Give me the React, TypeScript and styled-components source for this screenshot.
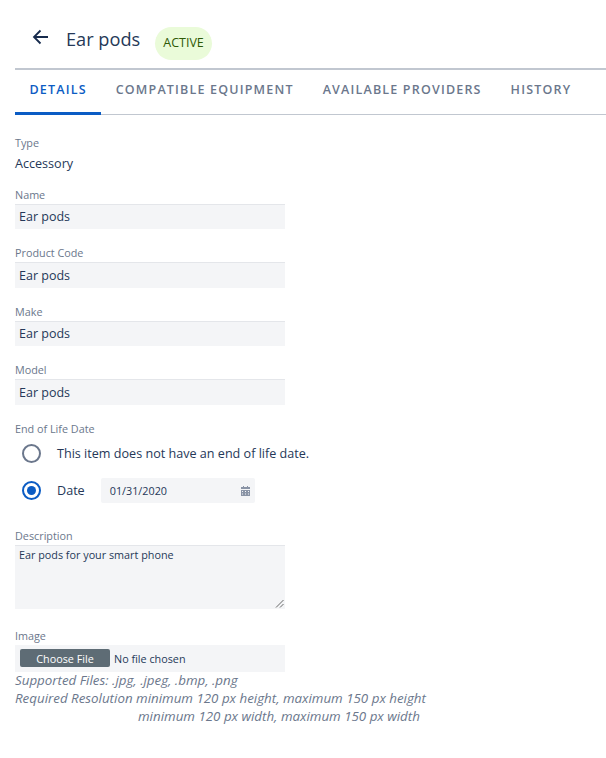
import React from 'react';
import styled, { createGlobalStyle } from 'styled-components';

const GlobalStyle = createGlobalStyle`
  html, body {
    margin: 0;
    padding: 0;
    background: #fff;
    font-family: "Open Sans", "Liberation Sans", sans-serif;
    color: #253858;
  }
`;

const Page = styled('div')`
  width: 606px;
  height: 758px;
  box-sizing: border-box;
  padding-left: 15px;
  overflow: hidden;
`;
const Header = styled('header')`
  height: 68px;
  box-sizing: border-box;
  padding: 27px 0 0 16px;
  display: flex;
  align-items: flex-start;
`;
const BackButton = styled('div')`
  width: 20px;
  height: 20px;
  margin-right: 15px;
  color: #172b4d;
`;
const Title = styled('h1')`
  margin: 0 15px 0 0;
  font-size: 18.2px;
  line-height: 24px;
  font-weight: 500;
  color: #253858;
`;
const Badge = styled('span')`
  height: 33px;
  box-sizing: border-box;
  padding: 0 8px 2px;
  display: flex;
  align-items: center;
  border-radius: 17px;
  background: #eafbd9;
  color: #2f5a06;
  font-size: 12.5px;
  font-weight: 500;
`;
const Tabs = styled('nav')`
  display: flex;
  height: 44px;
  border-top: 2px solid #c1c7d0;
  border-bottom: 1px solid #c1c7d0;
`;
const Tab = styled('div')<{ $active?: boolean }>`
  height: 45px;
  box-sizing: border-box;
  padding: 0 14.5px 3px;
  display: flex;
  align-items: center;
  font-size: 12.5px;
  font-weight: 600;
  letter-spacing: 1.18px;
  color: ${props => (props.$active ? '#0b5cc4' : '#6b778c')};
  border-bottom: 3px solid ${props => (props.$active ? '#0b5cc4' : 'transparent')};
`;
const Form = styled('div')`
  padding-top: 21px;
`;
const Label = styled('div')`
  font-size: 10.8px;
  line-height: 14px;
  margin-bottom: 2px;
  color: #6b778c;
`;
const TypeValue = styled('div')`
  font-size: 12.6px;
  line-height: 16px;
  margin-top: 6px;
  color: #253858;
`;
const Field = styled('div')<{ $gap?: number }>`
  margin-top: ${props => props.$gap ?? 17}px;
`;
const TextBox = styled('div')`
  width: 270px;
  height: 25.5px;
  box-sizing: border-box;
  padding: 0 4px;
  display: flex;
  align-items: center;
  background: #f4f5f7;
  border-top: 1px solid #e4e6ea;
  font-size: 12.5px;
  color: #253858;
`;
const RadioGroup = styled('div')`
  display: flex;
  flex-direction: column;
  gap: 7px;
  padding-top: 1px;
`;
const RadioRow = styled('div')`
  height: 30px;
  display: flex;
  align-items: center;
  padding-left: 7px;
`;
const RadioCircle = styled('span')<{ $checked?: boolean }>`
  width: 19px;
  height: 19px;
  box-sizing: border-box;
  border-radius: 50%;
  border: 2px solid ${props => (props.$checked ? '#0b5cc4' : '#6b778c')};
  display: flex;
  align-items: center;
  justify-content: center;
  margin-right: 16px;
  &::after {
    content: '';
    width: 9px;
    height: 9px;
    border-radius: 50%;
    background: ${props => (props.$checked ? '#0b5cc4' : 'transparent')};
  }
`;
const RadioText = styled('span')`
  font-size: 12.6px;
  color: #253858;
`;
const DateBox = styled('div')`
  width: 154px;
  height: 25px;
  margin-left: 16px;
  box-sizing: border-box;
  padding: 0 5px 0 9px;
  display: flex;
  align-items: center;
  justify-content: space-between;
  background: #f4f5f7;
  border-radius: 2px;
  font-size: 10.8px;
  color: #253858;
`;
const CalendarIcon = styled('svg')`
  width: 9px;
  height: 10px;
  color: #8a94a6;
`;
const TextArea = styled('div')`
  position: relative;
  width: 270px;
  height: 64px;
  box-sizing: border-box;
  padding: 2px 4px;
  background: #f4f5f7;
  border-top: 1px solid #e4e6ea;
  font-size: 10.8px;
  line-height: 14px;
  color: #253858;
`;
const ResizeGrip = styled('svg')`
  position: absolute;
  right: 1px;
  bottom: 1px;
  width: 9px;
  height: 9px;
`;
const FileBox = styled('div')`
  width: 270px;
  height: 27px;
  box-sizing: border-box;
  padding: 0 5px;
  display: flex;
  align-items: center;
  background: #f4f5f7;
  font-size: 10.8px;
  color: #253858;
`;
const FileButton = styled('span')`
  width: 90px;
  height: 18px;
  display: flex;
  align-items: center;
  justify-content: center;
  background: #5e6c75;
  border-radius: 2px;
  color: #fff;
  margin-right: 4px;
`;
const Hints = styled('div')`
  margin-top: -1px;
`;
const Hint = styled('div')<{ $indent?: boolean }>`
  font-size: 13.33px;
  line-height: 18px;
  font-style: italic;
  color: #6b778c;
  padding-left: ${props => (props.$indent ? '123px' : '0')};
  white-space: nowrap;
`;

const fields = ['Name', 'Product Code', 'Make', 'Model'];
const tabs = ['DETAILS', 'COMPATIBLE EQUIPMENT', 'AVAILABLE PROVIDERS', 'HISTORY'];

const App = () => {
  return (
    <Page>
      <GlobalStyle />
      <Header>
        <BackButton>
          <svg width="20" height="20" viewBox="0 0 20 20" fill="none" stroke="currentColor" strokeWidth="1.8">
            <path d="M17 10H3.500M9.500 3.500L3 10l6.500 6.500" />
          </svg>
        </BackButton>
        <Title>Ear pods</Title>
        <Badge>ACTIVE</Badge>
      </Header>
      <Tabs>
        {tabs.map((tab, i) => (
          <Tab key={tab} $active={i === 0}>{tab}</Tab>
        ))}
      </Tabs>
      <Form>
        <Label>Type</Label>
        <TypeValue>Accessory</TypeValue>
        {fields.map((field, i) => (
          <Field key={field} $gap={i === 0 ? 15.7 : 17}>
            <Label>{field}</Label>
            <TextBox>Ear pods</TextBox>
          </Field>
        ))}
        <Field>
          <Label>End of Life Date</Label>
          <RadioGroup>
            <RadioRow>
              <RadioCircle />
              <RadioText>This item does not have an end of life date.</RadioText>
            </RadioRow>
            <RadioRow>
              <RadioCircle $checked />
              <RadioText>Date</RadioText>
              <DateBox>
                01/31/2020
                <CalendarIcon viewBox="0 0 9 10" fill="currentColor">
                  <path d="M2 0h1v1h3V0h1v1h2v2H0V1h2z" />
                  <path d="M0 4h9v6H0zM1 5v1h1V5zM4 5v1h1V5zM7 5v1h1V5zM1 7.500v1h1v-1zM4 7.500v1h1v-1zM7 7.500v1h1v-1z" fillRule="evenodd" />
                </CalendarIcon>
              </DateBox>
            </RadioRow>
          </RadioGroup>
        </Field>
        <Field $gap={23}>
          <Label>Description</Label>
          <TextArea>
            Ear pods for your smart phone
            <ResizeGrip viewBox="0 0 9 9" stroke="#444" strokeWidth="0.8">
              <path d="M1 8.500L8.500 1M5 8.500L8.500 5" />
            </ResizeGrip>
          </TextArea>
        </Field>
        <Field $gap={20}>
          <Label>Image</Label>
          <FileBox>
            <FileButton>Choose File</FileButton>
            No file chosen
          </FileBox>
          <Hints>
            <Hint>Supported Files: .jpg, .jpeg, .bmp, .png</Hint>
            <Hint>Required Resolution minimum 120 px height, maximum 150 px height</Hint>
            <Hint $indent>minimum 120 px width, maximum 150 px width</Hint>
          </Hints>
        </Field>
      </Form>
    </Page>
  );
};

export default App;
